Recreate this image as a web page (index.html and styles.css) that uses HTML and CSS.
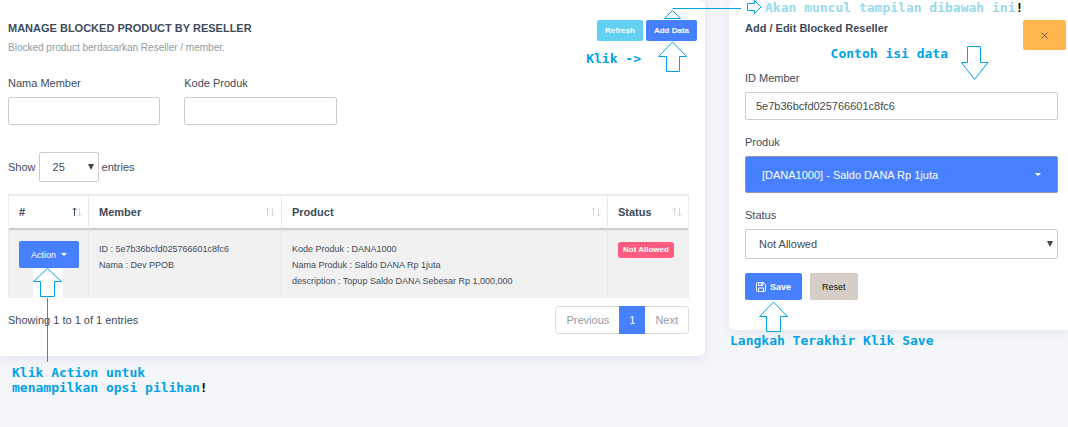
FILE: index.html
```html
<!DOCTYPE html>
<html lang="id">
<head>
<meta charset="utf-8">
<meta name="viewport" content="width=device-width, initial-scale=1">
<title>Manage Blocked Product</title>
<link rel="stylesheet" href="styles.css">
</head>
<body>
<main class="page">
  <section class="card list">
    <header class="card-head">
      <div>
        <h1 class="title">MANAGE BLOCKED PRODUCT BY RESELLER</h1>
        <p class="subtitle">Blocked product berdasarkan Reseller / member.</p>
      </div>
      <div class="tools">
        <button type="button" class="btn small info">Refresh</button>
        <div class="anchor">
          <button type="button" class="btn small primary">Add Data</button>
          <svg class="arrow above-add" width="77" height="20" viewBox="0 0 77 20"><path d="M8.500 8.500H77M8.500 10.500L.5 18.500H16.500Z"/></svg>
          <svg class="arrow below-add" width="30" height="32" viewBox="0 0 30 32"><path d="M14.500 1L.5 15.500H8.500V30.500H21.500V15.500H28.500Z"/></svg>
          <span class="note note-click">Klik -&gt;</span>
        </div>
      </div>
    </header>

    <form class="filters">
      <div class="field"><label for="member">Nama Member</label><input id="member" class="control" type="text"></div>
      <div class="field"><label for="code">Kode Produk</label><input id="code" class="control" type="text"></div>
    </form>

    <div class="length">
      <label for="length">Show</label>
      <span class="select"><select id="length" class="control"><option>25</option><option>50</option></select></span>
      <span>entries</span>
    </div>

    <table class="grid">
      <colgroup><col class="c-action"><col class="c-member"><col><col class="c-status"></colgroup>
      <thead>
        <tr>
          <th scope="col"><div class="th"><span>#</span><svg class="sort asc" width="9" height="10" viewBox="0 0 9 10"><path class="up" d="M2.500 9V1M.5 3L2.500 1L4.500 3"/><path class="down" d="M7.500 1V9M5.500 7L7.500 9L9.500 7"/></svg></div></th>
          <th scope="col"><div class="th"><span>Member</span><svg class="sort" width="9" height="10" viewBox="0 0 9 10"><path class="up" d="M2.500 9V1M.5 3L2.500 1L4.500 3"/><path class="down" d="M7.500 1V9M5.500 7L7.500 9L9.500 7"/></svg></div></th>
          <th scope="col"><div class="th"><span>Product</span><svg class="sort" width="9" height="10" viewBox="0 0 9 10"><path class="up" d="M2.500 9V1M.5 3L2.500 1L4.500 3"/><path class="down" d="M7.500 1V9M5.500 7L7.500 9L9.500 7"/></svg></div></th>
          <th scope="col"><div class="th"><span>Status</span><svg class="sort" width="9" height="10" viewBox="0 0 9 10"><path class="up" d="M2.500 9V1M.5 3L2.500 1L4.500 3"/><path class="down" d="M7.500 1V9M5.500 7L7.500 9L9.500 7"/></svg></div></th>
        </tr>
      </thead>
      <tbody>
        <tr>
          <td>
            <div class="anchor">
              <button type="button" class="btn primary action">Action <span class="caret"></span></button>
              <svg class="arrow below-action" width="30" height="94" viewBox="0 0 30 94"><path class="patch" d="M0 0H30V31H0Z"/><path d="M14.500 .5L.5 13.500H7.500V28.500H21.500V13.500H28.500ZM14.500 30V94"/></svg>
              <p class="note note-action">Klik Action untuk<br>menampilkan opsi pilihan<span class="bang">!</span></p>
            </div>
          </td>
          <td>ID : 5e7b36bcfd025766601c8fc6<br>Nama : Dev PPOB</td>
          <td>Kode Produk : DANA1000<br>Nama Produk : Saldo DANA Rp 1juta<br>description : Topup Saldo DANA Sebesar Rp 1,000,000</td>
          <td><span class="badge">Not Allowed</span></td>
        </tr>
      </tbody>
    </table>

    <footer class="list-foot">
      <span>Showing 1 to 1 of 1 entries</span>
      <nav class="pager" aria-label="Pagination"><a href="#">Previous</a><a href="#" class="current" aria-current="page">1</a><a href="#">Next</a></nav>
    </footer>
  </section>

  <section class="card editor">
    <h2 class="title">Add / Edit Blocked Reseller</h2>
    <button type="button" class="close" aria-label="Close"><svg width="7" height="7" viewBox="0 0 7 7"><path d="M.5 .5L6.500 6.500M6.500 .5L.5 6.500"/></svg></button>
    <p class="note note-result"><svg class="arrow" width="15" height="14" viewBox="0 0 15 14"><path d="M.5 3.500H7.500V.5L14 7L7.500 13.500V10.500H.5Z"/></svg><span>Akan muncul tampilan dibawah ini<span class="bang">!</span></span></p>
    <p class="note note-sample"><span>Contoh isi data</span><svg class="arrow" width="28" height="35" viewBox="0 0 28 35"><path d="M6.500 .5H19.500V16.500H27L13.500 33.500L.5 16.500H6.500Z"/></svg></p>

    <form class="edit-form">
      <div class="field"><label for="id">ID Member</label><input id="id" class="control" type="text" value="5e7b36bcfd025766601c8fc6"></div>
      <div class="field"><span id="product-label">Produk</span><button type="button" class="picker" aria-labelledby="product-label product-value" aria-haspopup="listbox"><span id="product-value">[DANA1000] - Saldo DANA Rp 1juta</span><span class="caret"></span></button></div>
      <div class="field"><label for="status">Status</label><span class="select"><select id="status" class="control"><option>Not Allowed</option><option>Allowed</option></select></span></div>
      <div class="buttons">
        <div class="anchor">
          <button type="button" class="btn primary save"><svg width="10" height="10" viewBox="0 0 10 10"><path d="M.5 1.500Q.5 .5 1.500 .5H7.500L9.500 2.500V8.500Q9.500 9.500 8.500 9.500H1.500Q.5 9.500 .5 8.500ZM2.500 .5V3.500H7V.5M5.500 1V3M2.500 9.500V6H7.500V9.500"/></svg>Save</button>
          <svg class="arrow below-save" width="30" height="32" viewBox="0 0 30 32"><path d="M14.500 1L.5 15.500H7.500V30.500H21.500V15.500H28.500Z"/></svg>
          <span class="note note-save">Langkah Terakhir Klik Save</span>
        </div>
        <button type="reset" class="btn reset">Reset</button>
      </div>
    </form>
  </section>
</main>
</body>
</html>
```
FILE: styles.css
```css
* { box-sizing: border-box; }

body {
  margin: 0;
  background: #f5f6fa;
  color: #3e4b5b;
  font: 11px/16px "Liberation Sans", Arial, sans-serif;
}

h1, h2, p { margin: 0; }
button, input, select { font: inherit; }

.page {
  display: grid;
  grid-template-columns: minmax(0, 705fr) minmax(0, 339fr);
  gap: 24px;
  align-items: start;
  min-height: 100vh;
}

.card {
  position: relative;
  background: #fff;
  box-shadow: 0 2px 12px rgba(69, 101, 173, 0.12);
}
.list { padding: 20px 16px 22px 8px; border-radius: 0 6px 6px 0; }
.editor { padding: 20px 10px 30px 16px; border-radius: 6px 0 0 6px; }

.title { font-size: 11px; line-height: 16px; font-weight: bold; color: #3e4b5b; }
.subtitle { margin-top: 4px; font-size: 10px; color: #8f9ca3; }

.card-head {
  display: flex;
  justify-content: space-between;
  align-items: flex-start;
  margin-right: -8px;
}
.tools { display: flex; gap: 3px; }
.anchor { position: relative; width: max-content; }

.btn {
  display: flex;
  align-items: center;
  justify-content: center;
  gap: 4px;
  height: 27px;
  padding: 0 12px;
  border: 0;
  border-radius: 2px;
  font-size: 9px;
  white-space: nowrap;
}
.small { height: 21px; padding: 0 8px; font-size: 8px; font-weight: bold; }
.primary { background: #4780ff; color: #fff; }
.info { background: #62d0f1; color: #fff; }
.reset { background: #d4cec6; color: #111; }
.save { font-weight: bold; padding: 0 11px; }
.save svg { fill: none; stroke: #fff; }

.caret {
  border: 3px solid transparent;
  border-top-color: currentColor;
  border-bottom: 0;
}

.field { display: flex; flex-direction: column; gap: 6px; }
.control {
  width: 100%;
  height: 28px;
  padding: 0 10px;
  border: 1px solid #ccc;
  border-radius: 2px;
  background: #fff;
  color: #464a4c;
}

.filters {
  display: grid;
  grid-template-columns: repeat(4, minmax(0, 1fr));
  gap: 24px;
  margin-top: 19px;
}

.length { display: flex; align-items: center; gap: 3px; margin: 27px 0 12px; }
.length .select { width: 60px; }
.select { position: relative; display: block; }
.select .control { height: 30px; padding: 0 13px; appearance: none; }
.select::after {
  content: "";
  position: absolute;
  right: 5px;
  top: 12px;
  border: 3px solid transparent;
  border-top: 6px solid #444;
  border-bottom: 0;
  pointer-events: none;
}

.grid {
  width: 100%;
  table-layout: fixed;
  border: 1px solid #e9ebee;
  border-width: 2px 1px 1px;
  border-spacing: 0;
}
.c-action { width: 80px; }
.c-member { width: 193px; }
.c-status { width: 80px; }
.grid th, .grid td { text-align: left; vertical-align: top; border-right: 1px solid #e5e7ea; }
.grid th:last-child, .grid td:last-child { border-right: 0; }
.grid th { padding: 8px 7px 8px 10px; border-bottom: 2px solid #ccc; }
.grid td { padding: 10px 10px 8px; background: #f1f1f1; font-size: 9px; border-top: 1px solid #e9ebee; }
.th { display: flex; justify-content: space-between; align-items: center; }
.sort { fill: none; stroke: #d4d7dc; overflow: visible; }
.asc .up { stroke: #3e4b5b; }
.action { gap: 5px; }

.badge {
  display: inline-block;
  padding: 0 5px;
  border-radius: 3px;
  background: #ff5b80;
  color: #fff;
  font-size: 8px;
  font-weight: bold;
  white-space: nowrap;
}

.list-foot { display: flex; justify-content: space-between; align-items: center; margin-top: 8px; }
.pager {
  display: flex;
  height: 28px;
  border: 1px solid #ddd;
  border-radius: 3px;
  line-height: 26px;
}
.pager a { padding: 0 10px; color: #8f9ca3; text-decoration: none; }
.pager .current { margin: -1px 0; line-height: 28px; background: #4780ff; color: #fff; }

.close {
  position: absolute;
  top: 20px;
  right: 2px;
  width: 43px;
  height: 30px;
  padding: 0;
  border: 0;
  border-radius: 2px;
  background: #ffb64d;
}
.close svg { stroke: #7a5360; }

.edit-form { display: flex; flex-direction: column; gap: 14px; margin-top: 34px; }
.picker {
  display: flex;
  align-items: center;
  justify-content: space-between;
  height: 37px;
  padding: 0 16px;
  border: 1px solid #8f96ad;
  border-radius: 2px;
  background: #4780ff;
  color: #fff;
}
.buttons { display: flex; gap: 8px; }

.note {
  position: absolute;
  color: #00a2e8;
  font: bold 13px/15px "DejaVu Sans Mono", monospace;
  white-space: nowrap;
}
.bang { color: #000; }
.arrow { fill: #fff; stroke: #00a2e8; }
.anchor .arrow { position: absolute; pointer-events: none; }
.arrow .patch { stroke: none; }

.above-add { right: -44px; top: -20px; z-index: 1; }
.above-add path { fill: none; }
.below-add { right: 9px; top: 21px; }
.note-click { right: 56px; top: 31px; }
.below-action { left: 14px; top: 27px; }
.note-action { left: -7px; top: 124px; }
.note-result { display: flex; gap: 3px; left: 18px; top: 0; color: #99d9ea; }
.note-sample { display: flex; gap: 13px; right: 79px; top: 46px; }
.below-save { left: 14px; top: 28px; }
.note-save { left: -15px; top: 60px; }
```
